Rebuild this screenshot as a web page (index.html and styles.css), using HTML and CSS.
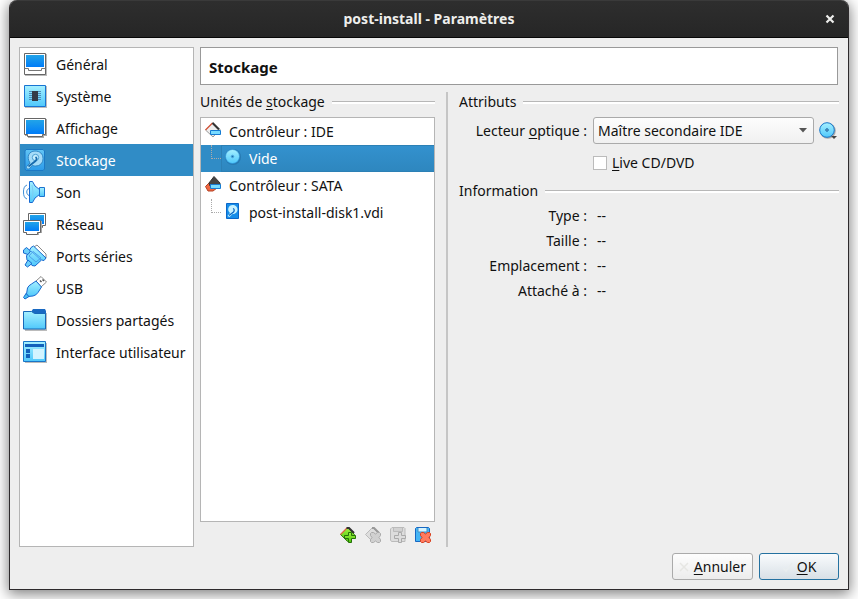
FILE: index.html
```
<!DOCTYPE html>
<html lang="fr">
<head>
<meta charset="utf-8">
<title>post-install - Paramètres</title>
<link rel="stylesheet" href="styles.css">
</head>
<body>
<svg class="defs" width="0" height="0" aria-hidden="true">
  <defs>
    <linearGradient id="screen" x1="0" y1="0" x2="0" y2="1"><stop offset="0" stop-color="#22a4e8"/><stop offset="1" stop-color="#007cf8"/></linearGradient>
    <linearGradient id="aqua" x1="0" y1="0" x2="0" y2="1"><stop offset="0" stop-color="#a6f0ff"/><stop offset="1" stop-color="#4fc8fb"/></linearGradient>
    <linearGradient id="sky" x1="0" y1="0" x2="0" y2="1"><stop offset="0" stop-color="#62c5f5"/><stop offset="1" stop-color="#2b9bea"/></linearGradient>
    <linearGradient id="lime" x1="0" y1="0" x2="0" y2="1"><stop offset="0" stop-color="#a4f340"/><stop offset="1" stop-color="#49c40d"/></linearGradient>
  </defs>
</svg>
<div class="window">
  <header class="titlebar">
    <h1>post-install - Paramètres</h1>
    <button class="close" type="button" aria-label="Fermer"><svg width="10" height="10" viewBox="0 0 10 10"><path d="M1.500 1.500l7 7M8.500 1.500l-7 7" stroke="#eeeeec" stroke-width="2.200"/></svg></button>
  </header>
  <div class="content">
    <nav class="sections">
      <button type="button"><svg viewBox="0 0 24 24"><path d="M2 2h22v22H2z" fill="#bbb"/><path d="M1.500 1.500h21v21h-21z" fill="#fff" stroke="#666"/><path d="M3 3h18v12H3z" fill="url(#screen)"/><path d="M1.500 16.500h4v2h13v-2h4" fill="none" stroke="#777"/></svg><span>Général</span></button>
      <button type="button"><svg viewBox="0 0 24 24"><path d="M2 2h22v22H2z" fill="#bbb"/><path d="M1.500 1.500h21v21h-21z" fill="url(#aqua)" stroke="#1874d2"/><path d="M6 7.500h12M6 9.500h12M6 11.500h12M6 13.500h12M6 15.500h12" stroke="#4c8bb9"/><path d="M9 7h6v10H9z" fill="#343b48"/></svg><span>Système</span></button>
      <button type="button"><svg viewBox="0 0 24 24"><path d="M2 3h22v17h-3v2H5v-2H2z" fill="#aaa"/><path d="M1.500 2.500h21v16h-3v2h-15v-2h-3z" fill="#fff" stroke="#666"/><path d="M3 4h18v14H3z" fill="url(#screen)"/></svg><span>Affichage</span></button>
      <button type="button" class="current" aria-current="page"><svg viewBox="0 0 24 24"><path d="M3 1.500h17l1.500 1.500v18l-1.500 1.500H3L2 21V3z" fill="url(#sky)" stroke="#1c79c4"/><path d="M12 3c5 0 8 3 8 7.500S17 18 12.500 18c-1.500 0-2-.3-3-.7l-3 3.200c-2 1.500-4-.5-2.500-2.500l3-3C3 9 6 3 12 3z" fill="#a5dcf8" stroke="#2f86c4"/><circle cx="12.500" cy="9.500" r="3.200" fill="#c8f0ff" stroke="#4d9fd2"/><path d="M5.500 18.500l7-5.500c1.500-1.500 1.500-3 0-4" fill="none" stroke="#176bad" stroke-width="1.800"/></svg><span>Stockage</span></button>
      <button type="button"><svg viewBox="0 0 24 24"><path d="M4 5C1 6 .5 9 .5 12s.5 6 3.500 7M6 8.500c-3 1-3 6 0 7" fill="none" stroke="#3d8fd6"/><path d="M6.500 1.500h3q1.500 5 7 8v5q-5.500 3-7 8h-3z" fill="url(#aqua)" stroke="#1768d0" stroke-linejoin="round"/><path d="M9 5q2 7 0 14" fill="none" stroke="#7bcdf3"/><path d="M16.500 7.500h5v9h-5z" fill="url(#aqua)" stroke="#1c74d0"/></svg><span>Son</span></button>
      <button type="button"><svg viewBox="0 0 24 24"><path d="M5.500 1.500h17v12h-3v2h-11v-2h-3z" fill="#fff" stroke="#666"/><path d="M7 3h14v9H7z" fill="url(#screen)"/><path d="M1 9h18v12h-3v2H4v-2H1z" fill="#aaa"/><path d="M.5 8.500h17v12h-3v2h-11v-2h-3z" fill="#fff" stroke="#666"/><path d="M2 10h14v9H2z" fill="url(#screen)"/></svg><span>Réseau</span></button>
      <button type="button"><svg viewBox="0 0 24 24"><path d="M11 3l3-2 9 9v4l-4 1z" fill="#fff" stroke="#888"/><path d="M8 3.500L10.500 2 23 14l-2 2.500-2.500-.5L12 22l-3-.5L4 16l-.5-4z" fill="url(#aqua)" stroke="#1768d0" stroke-linejoin="round"/><path d="M.5 6l3-2.500 4 3.500-2.500 3.500-4.500-1.500zM5 16l4 3.500L4.500 23 2 21z" fill="#6dd0fa" stroke="#1768d0" stroke-linejoin="round"/><path d="M8 7l10 9M10 7.500l8 6.500-5 4-7-6z" fill="none" stroke="#4ba0ea"/></svg><span>Ports séries</span></button>
      <button type="button"><svg viewBox="0 0 24 24"><path d="M13 5l5-4.500L23.500 6 18 11z" fill="#fff" stroke="#888" stroke-linejoin="round"/><path d="M17 4.500l1.500 1.500m1-2.500L21 5" stroke="#555" stroke-width="1.500"/><path d="M3.500 18l1-6q1-2.500 4-4l4.500-3 5.500 6-3.500 5.500q-2 3-5 3.500l-5 .5z" fill="url(#aqua)" stroke="#1768d0" stroke-linejoin="round"/><path d="M3 17.500l3 3-4 2.500-1.500-1.500z" fill="#48c0f1" stroke="#1768d0"/></svg><span>USB</span></button>
      <button type="button"><svg viewBox="0 0 24 24"><path d="M2 5h22v18H2z" fill="#bbb"/><path d="M8 4l2-3h12l1 2v4H8z" fill="#1969c2"/><path d="M.5 3.500h8l3 2h11v15.500H.5z" fill="url(#aqua)" stroke="#1768b8"/></svg><span>Dossiers partagés</span></button>
      <button type="button"><svg viewBox="0 0 24 24"><path d="M2 3h22v20H2z" fill="#bbb"/><path d="M.5 1.500h22v20H.5z" fill="url(#aqua)" stroke="#1975c7"/><path d="M2 4h19v3H2zM3 9h4v4H3zM3 14h4v4H3z" fill="#1261bb"/><path d="M10 9h11v10H10z" fill="#d3f4ff"/></svg><span>Interface utilisateur</span></button>
    </nav>
    <main>
      <h2>Stockage</h2>
      <div class="panes">
        <section class="units">
          <h3>Unités de <u>s</u>tockage</h3>
          <ul class="tree">
            <li class="controller"><svg viewBox="0 0 16 16"><path d="M.5 8L8 .5l7 7L8 15z" fill="#eee" stroke="#999"/><path d="M.5 8L7.500 1" stroke="#d8573b" stroke-width="1.300"/><path d="M7.500 1l6.500 6.500" stroke="#333" stroke-width="2"/><path d="M5.500 8.500h10v4h-10z" fill="#79dbff" stroke="#167cd3"/></svg>Contrôleur : IDE</li>
            <li class="medium selected"><span class="branch"></span><span class="item"><svg viewBox="0 0 16 16"><circle cx="8" cy="8" r="8" fill="#2779b1"/><circle cx="7.500" cy="7.500" r="7" fill="url(#aqua)" stroke="#2990d8" stroke-width=".6"/><circle cx="7.500" cy="7.500" r="1.300" fill="#176dac" stroke="#56b4e8"/></svg>Vide</span></li>
            <li class="controller"><svg viewBox="0 0 16 16"><path d="M.5 10.500L5 6l7 6-4 3H3z" fill="#ee6741" stroke="#b54224"/><path d="M4 7l5-6.500L15 7v3H5z" fill="#444" stroke="#333"/><path d="M5.500 8.500h10v4h-10z" fill="#79dbff" stroke="#167cd3"/></svg>Contrôleur : SATA</li>
            <li class="medium"><span class="branch"></span><span class="item"><svg viewBox="0 0 16 16"><path d="M1.500.5h12v15h-12z" fill="#168de9" stroke="#0967c9"/><path d="M7.500 2c3 0 5 2 5 4.500S10.500 11 7.500 11l-3 3-2-1L5 10C1.500 7 3.500 2 7.500 2z" fill="#c6f1ff"/><path d="M4 12.500L8.500 9c1-1 1-3-.5-3.500" fill="none" stroke="#0766c5" stroke-width="1.300"/></svg>post-install-disk1.vdi</span></li>
          </ul>
          <div class="tools">
            <button type="button" aria-label="Ajouter un contrôleur"><svg viewBox="0 0 16 16"><path d="M.5 7.500L7.500.5l7 7-7 7z" fill="url(#lime)" stroke="#397b16"/><path d="M.5 7.500l6.500-6.500" stroke="#dc6540" stroke-width="1.300"/><path d="M6.500 1H9l5 5" fill="none" stroke="#333" stroke-width="2"/><path d="M8.500 5.500h3v3h4v3h-4v4h-3v-4h-4v-3h4z" fill="url(#lime)" stroke="#257009"/></svg></button>
            <button type="button" disabled aria-label="Supprimer le contrôleur"><svg viewBox="0 0 16 16"><path d="M.5 7.500L7.500.5l7 7-7 7z" fill="#ddd" stroke="#bbb"/><path d="M7 1h2l5 5" fill="none" stroke="#999" stroke-width="2"/><path d="M6.500 5.500h2l2 1.500 2-1.500h2l1 1v2L14 10.500l1.500 2v2l-1 1h-2l-2-1.500-2 1.500h-2l-1-1v-2l1.500-2-1.500-2v-2z" fill="#d0d0d0" stroke="#aaa"/></svg></button>
            <button type="button" disabled aria-label="Ajouter un disque"><svg viewBox="0 0 16 16"><path d="M2 .5h12l1 1v13H1.500L.5 13V2z" fill="#ddd" stroke="#bbb"/><path d="M3.500 1v3.500h9V1" fill="#d2d2d2" stroke="#bbb"/><path d="M8.500 5.500h3v3h4v3h-4v4h-3v-4h-4v-3h4z" fill="#ddd" stroke="#aaa"/></svg></button>
            <button type="button" aria-label="Supprimer le disque"><svg viewBox="0 0 16 16"><path d="M1.500.5h12l1 1v13H.5v-13z" fill="#45b5f4" stroke="#1767c2"/><path d="M3 1v4h9V1" fill="#d6f4ff" stroke="#438fc5"/><path d="M6.500 5.500h2l2 1.500 2-1.500h2l1 1v2L14 10.500l1.500 2v2l-1 1h-2l-2-1.500-2 1.500h-2l-1-1v-2l1.500-2-1.500-2v-2z" fill="#ff7a5e" stroke="#d8401f"/></svg></button>
          </div>
        </section>
        <div class="divider"></div>
        <section class="details">
          <h3>Attributs</h3>
          <div class="fields">
            <label for="drive">Lecteur <u>o</u>ptique :</label>
            <div class="drive">
              <div class="combo"><select id="drive"><option>Maître secondaire IDE</option></select><svg width="8" height="5" viewBox="0 0 8 5"><path d="M0 0h8L4 4.500z" fill="#555"/></svg></div>
              <button class="disc" type="button" aria-label="Choisir un disque"><svg viewBox="0 0 18 18"><circle cx="8.800" cy="8.800" r="8" fill="#aaa"/><circle cx="8" cy="8" r="7.300" fill="url(#aqua)" stroke="#1878cb"/><circle cx="8" cy="8" r="1.300" fill="#72aace" stroke="#1e6eaa"/><path d="M12 14h6l-3 3z" fill="#444"/></svg></button>
            </div>
            <div class="live"><input type="checkbox" id="live"><label for="live"><u>L</u>ive CD/DVD</label></div>
          </div>
          <h3>Information</h3>
          <dl>
            <dt>Type :</dt><dd>--</dd>
            <dt>Taille :</dt><dd>--</dd>
            <dt>Emplacement :</dt><dd>--</dd>
            <dt>Attaché à :</dt><dd>--</dd>
          </dl>
        </section>
      </div>
    </main>
  </div>
  <footer>
    <button type="button"><svg viewBox="0 0 16 16"><path d="M4 4l8 8m0-8l-8 8" stroke="#e6e6e3" stroke-width="1.500"/></svg><span><u>A</u>nnuler</span></button>
    <button type="button" class="default"><svg viewBox="0 0 16 16"><path d="M4 9l3 3 6-8" fill="none" stroke="#e9edef" stroke-width="1.500"/></svg><span><u>O</u>K</span></button>
  </footer>
</div>
</body>
</html>
```
FILE: styles.css
```
* { box-sizing: border-box; }
body {
  margin: 0;
  padding: 0 9px 9px;
  min-height: 100vh;
  display: flex;
  background: #fff;
  color: #111;
  font: 14px/20px "Noto Sans", sans-serif;
  overflow: hidden;
}
.defs { position: absolute; }
h1, h2, h3, ul, dl, dd { margin: 0; padding: 0; font: inherit; }
button { padding: 0; border: 0; background: none; color: inherit; font: inherit; }
svg { display: block; flex: none; }
u { text-underline-offset: 2px; text-decoration-thickness: 1px; text-decoration-skip-ink: none; }

.window {
  flex: 1;
  display: flex;
  flex-direction: column;
  border: 1px solid #2d2a2c;
  border-top: 0;
  border-radius: 8px 8px 0 0;
  background: #eee;
  box-shadow: 0 3px 14px 1px rgba(0, 0, 0, .5);
}
.titlebar {
  display: grid;
  grid-template-columns: 36px 1fr 36px;
  align-items: center;
  height: 38px;
  border-top: 1px solid #3a3a3a;
  border-bottom: 1px solid #070707;
  border-radius: 7px 7px 0 0;
  background: linear-gradient(#2e2e2e, #262626);
  color: #eeeeec;
}
.titlebar h1 { grid-column: 2; text-align: center; font-weight: 700; font-size: 14px; }
.close { justify-self: center; padding: 4px; }

.content { flex: 1; display: flex; gap: 6px; padding: 9px 9px 0; }
.sections { width: 175px; border: 1px solid #b5b5b5; background: #fff; }
.sections button {
  display: flex;
  align-items: center;
  gap: 9px;
  width: 100%;
  height: 32px;
  padding-left: 3px;
  white-space: nowrap;
}
.sections svg { width: 24px; height: 24px; }
.sections span { padding-top: 2px; }
.sections .current { background: #308cc6; color: #fff; }

main { flex: 1; display: flex; flex-direction: column; gap: 7px; }
h2 {
  height: 38px;
  margin-right: 1px;
  padding: 0 8px;
  border: 1px solid #999;
  background: #fff;
  font-size: 15px;
  font-weight: 700;
  line-height: 38px;
}
.panes { flex: 1; display: flex; }
h3 { display: flex; align-items: center; white-space: pre; }
h3::after {
  content: "";
  flex: 1;
  height: 2px;
  margin-left: 7px;
  border-top: 1px solid #b7b7b7;
  background: #fff;
}
.units { width: 235px; display: flex; flex-direction: column; }
.tree {
  flex: 1;
  margin-top: 5px;
  border: 1px solid #b5b5b5;
  background: #fff;
  list-style: none;
}
.tree li { display: flex; height: 27px; align-items: center; }
.tree svg { width: 16px; height: 16px; margin-bottom: 3px; }
.controller { gap: 8px; padding-left: 4px; }
.medium { padding-left: 10px; }
.branch { align-self: flex-start; width: 10px; height: 14px; border-left: 1px dotted #aaa; border-bottom: 1px dotted #aaa; }
.item { flex: 1; display: flex; align-items: center; gap: 8px; height: 27px; padding-left: 4px; }
.selected { background: #308cc6; color: #fff; }
.selected .item { border: 1px solid #2c80b5; border-right: 0; padding-left: 3px; background: linear-gradient(#3391ce, #2e87bf); }
.tools { display: flex; align-items: flex-start; justify-content: flex-end; gap: 9px; height: 25px; padding: 5px 4px 0 0; }
.tools svg { width: 16px; height: 16px; }
.divider { width: 2px; margin: 0 11px; background: #c5c5c5; }

.details { flex: 1; }
.fields {
  display: grid;
  grid-template-columns: 128px 1fr;
  gap: 9px 6px;
  align-items: center;
  padding: 5px 0 8px;
}
.fields > label, dt { text-align: right; }
.drive { display: flex; align-items: center; gap: 5px; }
.combo { position: relative; flex: 1; }
.combo svg { position: absolute; right: 7px; top: 11px; pointer-events: none; }
select {
  appearance: none;
  display: block;
  width: 100%;
  height: 27px;
  padding: 0 20px 0 4px;
  border: 1px solid #aaa;
  border-radius: 3px;
  background: linear-gradient(#fdfdfd, #f0f0f0);
  color: inherit;
  font: inherit;
}
.disc svg { width: 18px; height: 18px; }
.disc { margin-right: 2px; }
.live { grid-column: 2; display: flex; align-items: center; gap: 5px; }
.live input { appearance: none; width: 14px; height: 14px; margin: 0; border: 1px solid #bbb; background: #fff; }
dl { display: grid; grid-template-columns: 128px 1fr; gap: 5px 10px; padding-top: 5px; }

footer { display: flex; justify-content: flex-end; gap: 6px; padding: 6px 9px 9px; }
footer button {
  display: flex;
  align-items: center;
  gap: 2px;
  min-width: 80px;
  height: 27px;
  padding: 0 6px 0 3px;
  border: 1px solid #aaa;
  border-radius: 3px;
  background: linear-gradient(#fdfdfd, #ececec);
}
footer svg { width: 16px; height: 16px; }
footer .default { justify-content: center; border-color: #2471a0; background: linear-gradient(#f9fbfd, #d8e0e6); }
```
